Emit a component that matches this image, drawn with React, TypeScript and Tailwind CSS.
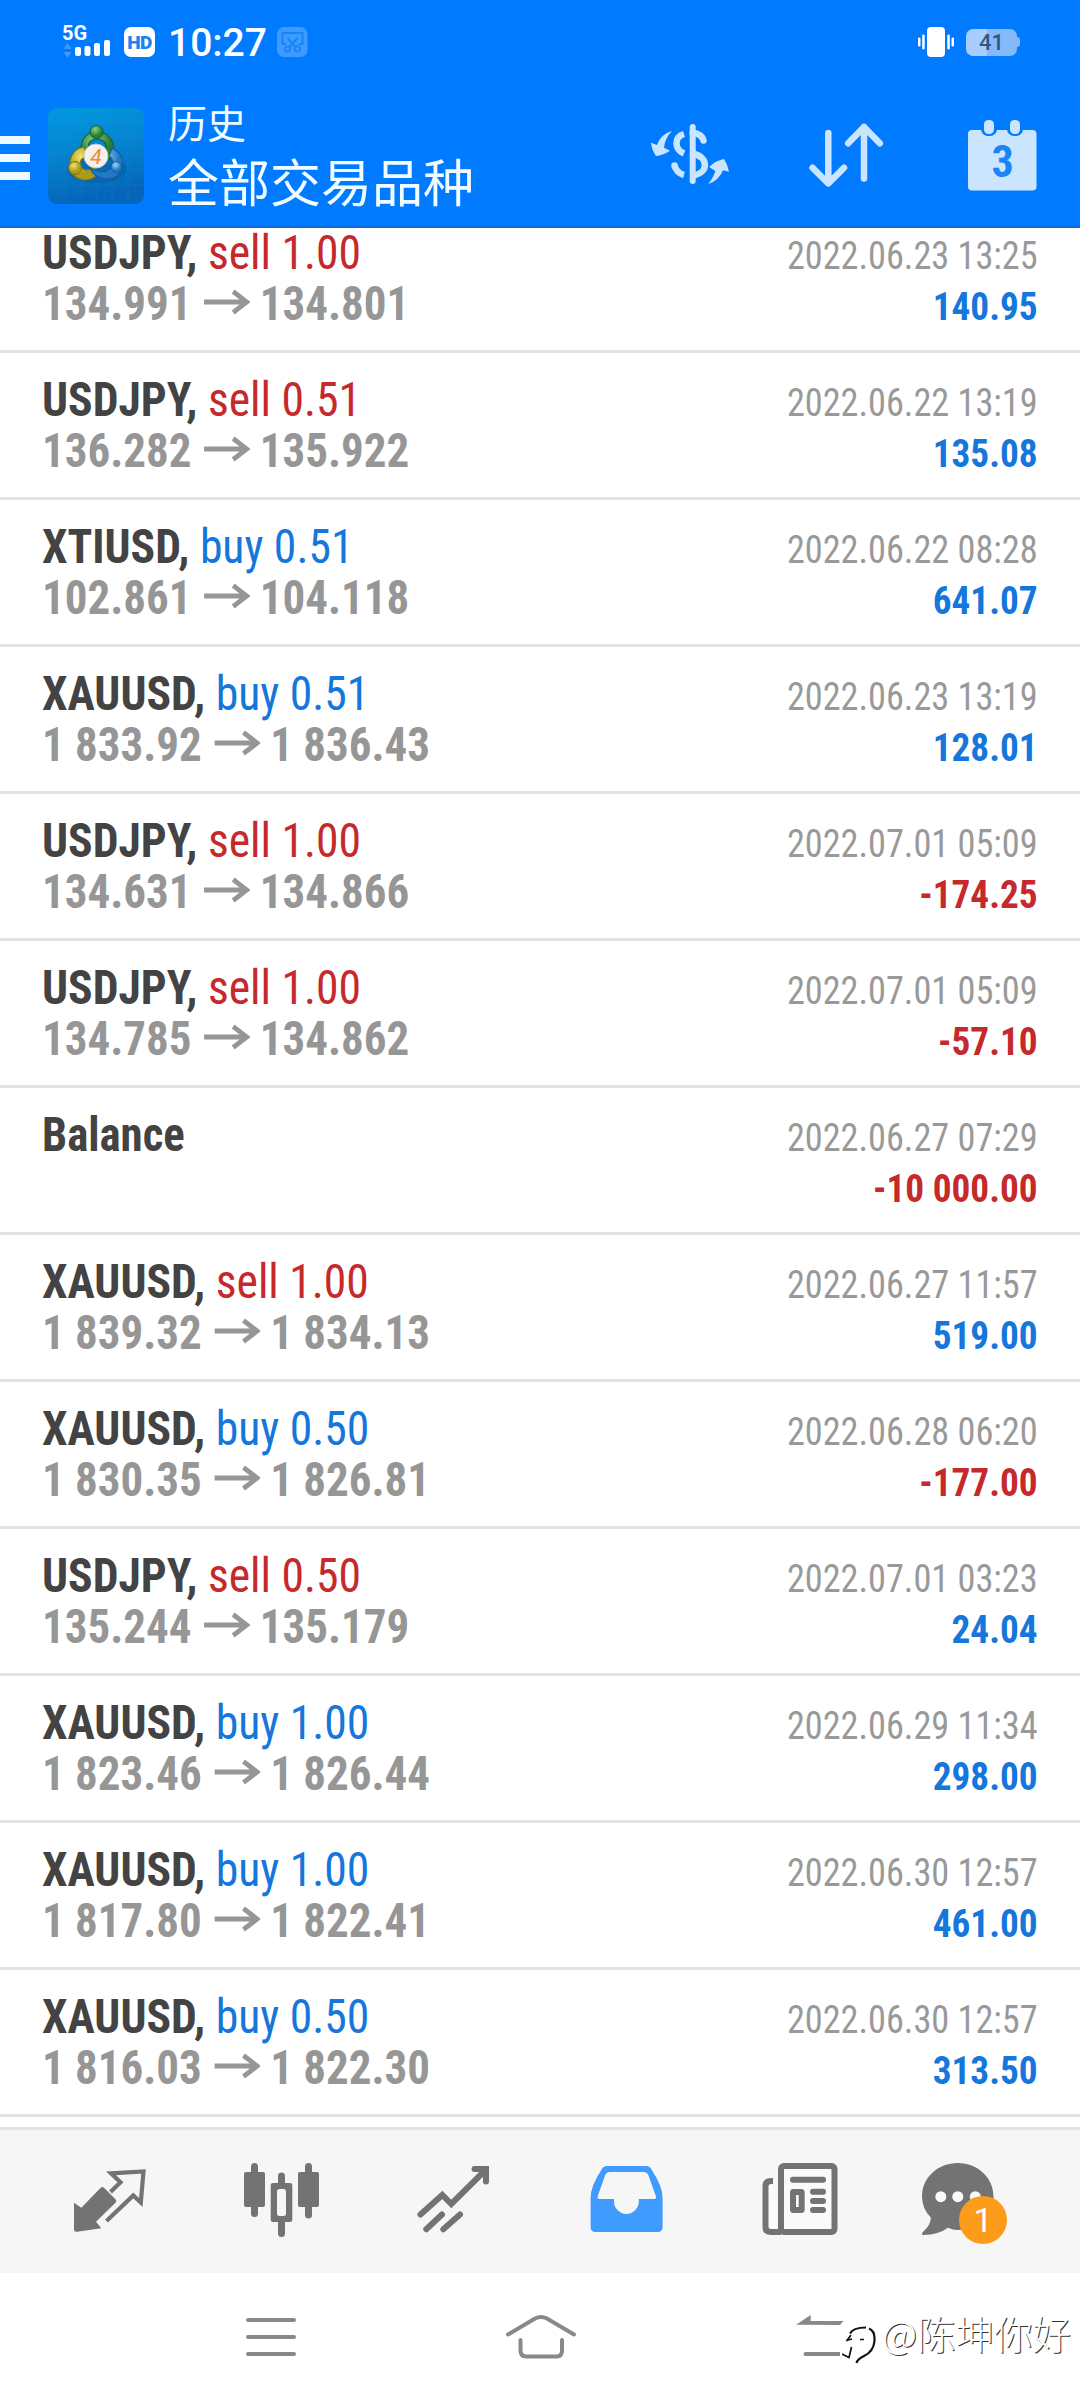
type Deal = {
  symbol: string;
  side?: "buy" | "sell";
  volume?: string;
  open?: string;
  close?: string;
  time: string;
  profit: string;
};

const deals: Deal[] = [
  { symbol: "USDJPY", side: "sell", volume: "1.00", open: "134.991", close: "134.801", time: "2022.06.23 13:25", profit: "140.95" },
  { symbol: "USDJPY", side: "sell", volume: "0.51", open: "136.282", close: "135.922", time: "2022.06.22 13:19", profit: "135.08" },
  { symbol: "XTIUSD", side: "buy", volume: "0.51", open: "102.861", close: "104.118", time: "2022.06.22 08:28", profit: "641.07" },
  { symbol: "XAUUSD", side: "buy", volume: "0.51", open: "1 833.92", close: "1 836.43", time: "2022.06.23 13:19", profit: "128.01" },
  { symbol: "USDJPY", side: "sell", volume: "1.00", open: "134.631", close: "134.866", time: "2022.07.01 05:09", profit: "-174.25" },
  { symbol: "USDJPY", side: "sell", volume: "1.00", open: "134.785", close: "134.862", time: "2022.07.01 05:09", profit: "-57.10" },
  { symbol: "Balance", time: "2022.06.27 07:29", profit: "-10 000.00" },
  { symbol: "XAUUSD", side: "sell", volume: "1.00", open: "1 839.32", close: "1 834.13", time: "2022.06.27 11:57", profit: "519.00" },
  { symbol: "XAUUSD", side: "buy", volume: "0.50", open: "1 830.35", close: "1 826.81", time: "2022.06.28 06:20", profit: "-177.00" },
  { symbol: "USDJPY", side: "sell", volume: "0.50", open: "135.244", close: "135.179", time: "2022.07.01 03:23", profit: "24.04" },
  { symbol: "XAUUSD", side: "buy", volume: "1.00", open: "1 823.46", close: "1 826.44", time: "2022.06.29 11:34", profit: "298.00" },
  { symbol: "XAUUSD", side: "buy", volume: "1.00", open: "1 817.80", close: "1 822.41", time: "2022.06.30 12:57", profit: "461.00" },
  { symbol: "XAUUSD", side: "buy", volume: "0.50", open: "1 816.03", close: "1 822.30", time: "2022.06.30 12:57", profit: "313.50" },
];

const StatusBar = () => (
  <div className="flex h-[84px] shrink-0 items-center pr-[60px] pl-[62px] font-['Roboto',sans-serif]">
    <svg width="48" height="34" viewBox="0 0 48 34" fill="#fff">
      <text x="0" y="15" fontSize="20" fontWeight="700" fontFamily="Roboto">5G</text>
      <path d="M5.500 18l4 6h-8zM5.500 33l4-6h-8z" fill="#3d9bff" />
      <rect x="13" y="22" width="6" height="9" rx="2" />
      <rect x="22.500" y="21" width="6" height="10" rx="2" />
      <rect x="32" y="18" width="6" height="13" rx="2" />
      <rect x="42" y="15" width="6" height="16" rx="2" />
    </svg>
    <div className="ml-[14px] flex h-[30px] w-[31px] items-center justify-center rounded-[7px] bg-white text-[19px] leading-none font-black tracking-[-0.5px] text-[#1a83f0]">
      HD
    </div>
    <div className="mt-0.5 ml-[13px] text-[39px] leading-none font-medium text-white">10:27</div>
    <svg className="ml-[10px]" width="31" height="30" viewBox="0 0 31 30" fill="none">
      <rect width="30.500" height="30" rx="7" fill="#3d9bff" />
      <path d="M9 17H5.500V6h20v11H22" stroke="#1683f7" strokeWidth="2" />
      <path d="M10.500 11l8 9M20.500 11l-8 9" stroke="#1683f7" strokeWidth="2" />
      <circle cx="10.500" cy="22" r="2.600" stroke="#1683f7" strokeWidth="1.800" />
      <circle cx="20.500" cy="22" r="2.600" stroke="#1683f7" strokeWidth="1.800" />
    </svg>
    <svg className="ml-auto" width="36" height="30" viewBox="0 0 36 30" fill="#fff">
      <rect x="9" width="18" height="30" rx="4" />
      <rect x="0" y="10.500" width="2.500" height="9" rx="1.200" />
      <rect x="4.200" y="7.500" width="2.500" height="15" rx="1.200" />
      <rect x="29.300" y="7.500" width="2.500" height="15" rx="1.200" />
      <rect x="33.500" y="10.500" width="2.500" height="9" rx="1.200" />
    </svg>
    <div className="ml-3 flex items-center">
      <div className="flex h-[27px] w-[51px] items-center justify-center rounded-[7px] bg-linear-to-r from-[#a9cdff] from-41% to-[#85b9fb] to-41% pt-0.5 text-[22px] leading-none font-medium text-[#33557f]">
        41
      </div>
      <div className="h-[10px] w-[3px] rounded-r bg-[#85b9fb]" />
    </div>
  </div>
);

const AppLogo = () => (
  <svg className="ml-[18px]" width="96" height="96" viewBox="0 0 96 96">
    <defs>
      <linearGradient id="logoBg" x1="0" y1="0" x2="0.200" y2="1">
        <stop offset="0" stopColor="#0398e2" />
        <stop offset="0.500" stopColor="#0583cf" />
        <stop offset="1" stopColor="#0565b8" />
      </linearGradient>
      <radialGradient id="green" cx="0.400" cy="0.300">
        <stop offset="0" stopColor="#8fd080" />
        <stop offset="1" stopColor="#27803a" />
      </radialGradient>
      <radialGradient id="yellow" cx="0.400" cy="0.300">
        <stop offset="0" stopColor="#f0e468" />
        <stop offset="1" stopColor="#a99a1c" />
      </radialGradient>
      <radialGradient id="blue" cx="0.400" cy="0.300">
        <stop offset="0" stopColor="#9ad6fb" />
        <stop offset="1" stopColor="#2178c2" />
      </radialGradient>
    </defs>
    <rect width="96" height="96" rx="9" fill="url(#logoBg)" />
    <path d="M0 13h96M0 29h96M0 45h96M0 61h96M0 77h96M16 0v96M32 0v96M48 0v96M64 0v96M80 0v96" stroke="#35b2ee" strokeOpacity="0.120" />
    <ellipse cx="49" cy="61" rx="30" ry="14" fill="#044f8e" opacity="0.300" />
    <path d="M35 46c-5-12 2-22 14-22s20 10 15 24c-3 6-8 5-10 1l4-8c1-6-3-10-9-10s-10 4-8 10l3 6c-2 3-7 3-9-1z" fill="url(#green)" stroke="#17602f" strokeWidth="1.200" />
    <path d="M36 39c-9 1-15 9-14 19 1 9 7 14 15 14 6 0 10-2 12-6l-3-7c-5 4-11 4-13-1-2-6 2-9 7-9z" fill="url(#yellow)" stroke="#7c7016" strokeWidth="1.200" />
    <path d="M64 40c8 3 12 11 10 20-2 8-9 12-17 11-7-1-12-4-15-11 7 4 15 5 20 1 4-4 4-9-1-13z" fill="url(#blue)" stroke="#155c9c" strokeWidth="1.200" />
    <circle cx="48.500" cy="24" r="6.500" fill="url(#green)" stroke="#17602f" strokeWidth="1" />
    <circle cx="27" cy="60" r="6.500" fill="url(#yellow)" stroke="#7c7016" strokeWidth="1" />
    <circle cx="68.500" cy="59" r="5.500" fill="url(#blue)" stroke="#155c9c" strokeWidth="1" />
    <circle cx="48" cy="48" r="12" fill="#f4f0ee" stroke="#c9c4bd" strokeWidth="1" />
    <text x="48" y="55.500" fontSize="21" textAnchor="middle" fontFamily="Roboto" fontStyle="italic" fill="#ef8a2c">4</text>
  </svg>
);

const Header = () => (
  <header className="flex h-[228px] shrink-0 flex-col border-b-2 border-[#0b6ddb] bg-[#007bff]">
    <StatusBar />
    <div className="flex h-36 shrink-0 items-center">
      <div className="mt-1 flex w-[30px] flex-col gap-[10px]">
        <div className="h-2 bg-[#eefaff]" />
        <div className="h-2 bg-[#eefaff]" />
        <div className="h-2 bg-[#eefaff]" />
      </div>
      <AppLogo />
      <div className="mb-[11px] ml-6 font-['Noto_Sans_CJK_SC',sans-serif] text-[#f0fcff]">
        <div className="text-[39px] leading-[58px]">历史</div>
        <div className="text-[51px] leading-[60px]">全部交易品种</div>
      </div>
      <div className="ml-auto flex">
        <div className="flex w-[156px] justify-center">
          <svg width="96" height="96" viewBox="0 0 96 96" fill="none" stroke="#cce5ff" strokeWidth="6.500">
            <path d="M50.700 19v54" strokeWidth="6" strokeLinecap="round" />
            <path d="M42 26C32 29 32 41 42 45.500" />
            <path d="M32.500 57.500Q34.500 65 42 67" />
            <path d="M32.500 57.500h0" strokeLinecap="round" />
            <path d="M50.700 24.700Q60 26 61.500 32.500" strokeLinecap="round" />
            <path d="M50.700 45.500C67 49 67 65 50.700 67.500" />
            <path d="M30 23Q18.700 26 15 37L9 34.700Q10 42.700 14 48 21.300 47.300 28 42.700L22 39.700Q23 30 30 23z" fill="#cce5ff" stroke="none" />
            <path d="M66.300 76Q72 68.700 73.300 63L67.300 59Q73 52.700 82 51 85.300 56 87 63.700L81 62.300Q76.700 72.700 66.300 76z" fill="#cce5ff" stroke="none" />
          </svg>
        </div>
        <div className="flex w-[156px] justify-center">
          <svg width="96" height="96" viewBox="0 0 96 96" fill="none" stroke="#cce5ff" strokeWidth="6.500" strokeLinecap="round" strokeLinejoin="round">
            <path d="M30.300 25v50M14.500 59.700L30.300 75.500 46 59.700" />
            <path d="M66 70.500V19M50.200 35.300L66 19l15.800 16.300" />
          </svg>
        </div>
        <div className="flex w-[156px] justify-center">
          <svg width="96" height="96" viewBox="0 0 96 96">
            <rect x="14" y="22" width="68.500" height="60.500" rx="4" fill="#cce5ff" />
            <rect x="27" y="4" width="16" height="24" rx="7" fill="#007bff" />
            <rect x="53" y="4" width="16" height="24" rx="7" fill="#007bff" />
            <rect x="30" y="12" width="10" height="14" rx="4.500" fill="#cce5ff" />
            <rect x="56" y="12" width="10" height="14" rx="4.500" fill="#cce5ff" />
            <text x="48.500" y="69" fontSize="44" fontWeight="700" textAnchor="middle" fontFamily="Roboto Condensed" fill="#1a86f5">3</text>
          </svg>
        </div>
      </div>
    </div>
  </header>
);

const DealRow = ({ deal }: { deal: Deal }) => (
  <div className="flex h-[147px] shrink-0 justify-between border-b-[3px] border-[#e3e3e3] px-[42px] font-['Roboto_Condensed',sans-serif] whitespace-nowrap">
    <div className="pt-[21px] text-[48px] leading-[51px]">
      <div className={deal.side ? "origin-left scale-x-[0.95]" : "origin-left scale-x-[0.933]"}>
        <span className="font-bold text-[#434343]">{deal.side ? deal.symbol + "," : deal.symbol}</span>
        {deal.side && (
          <span className={deal.side === "buy" ? "font-[440] text-[#1576dc]" : "font-[440] text-[#c5292b]"}>
            {" "}
            {deal.side} {deal.volume}
          </span>
        )}
      </div>
      {deal.open && (
        <div className="flex origin-left scale-x-[0.937] font-bold text-[#969696]">
          <span>{deal.open}</span>
          <svg className="mt-[9px] mr-[11px] ml-[13px]" width="49" height="30" viewBox="0 0 49 30" fill="none" stroke="#969696" strokeWidth="5">
            <path d="M0 15h46M31 4.500L45.500 15 31 25.500" />
          </svg>
          <span>{deal.close}</span>
        </div>
      )}
    </div>
    <div className="pt-[25px] text-right text-[39px] leading-[51px]">
      <div className="origin-right scale-x-[0.93] font-[430] text-[#999]">{deal.time}</div>
      <div className={"origin-right scale-x-[0.955] font-bold " + (deal.profit.startsWith("-") ? "text-[#c5292b]" : "text-[#1576dc]")}>
        {deal.profit}
      </div>
    </div>
  </div>
);

const TabBar = () => (
  <nav className="flex h-[146px] shrink-0 border-t-[3px] border-[#e3e3e3] bg-[#f6f6f6] px-6 pt-6">
    <div className="flex w-[172px] justify-center">
      <svg width="100" height="96" viewBox="0 0 100 96" fill="none">
        <path d="M14 48.700L21.300 53.700 40.500 34Q42.300 32 44 33.700L55.700 45.500Q57 47 55.700 48.500L36 67.700 41.300 74.300 17 77.700Q14 78 14 75.500z" fill="#737373" />
        <path d="M50.500 38L60.500 28.300 51 19.300 83.500 17.500 80.800 48.500 73.300 41.500 46.500 67" stroke="#737373" strokeWidth="4.200" />
      </svg>
    </div>
    <div className="flex w-[172px] justify-center">
      <svg width="100" height="96" viewBox="0 0 100 96" fill="#737373">
        <rect x="12" y="18" width="21" height="35" rx="2" />
        <rect x="19" y="9" width="7" height="54" rx="3.500" />
        <path fillRule="evenodd" d="M41 29h17a2.300 2.300 0 0 1 2.300 2.300v34.400A2.300 2.300 0 0 1 58 68H41a2.300 2.300 0 0 1-2.300-2.300V31.300A2.300 2.300 0 0 1 41 29zm6.500 6A2.500 2.500 0 0 0 45 37.500v22a2.500 2.500 0 0 0 2.500 2.500h4a2.500 2.500 0 0 0 2.500-2.500v-22a2.500 2.500 0 0 0-2.500-2.500z" />
        <path d="M46 29.500V22a3.500 3.500 0 0 1 7 0v7.500zM46 67.500v12a3.500 3.500 0 0 0 7 0v-12z" />
        <rect x="66" y="18" width="21" height="35" rx="2" />
        <rect x="73" y="9" width="7" height="55.500" rx="3.500" />
      </svg>
    </div>
    <div className="flex w-[172px] justify-center">
      <svg width="100" height="96" viewBox="0 0 100 96" fill="none" stroke="#737373" strokeWidth="6" strokeLinecap="round">
        <path d="M16.500 60.500L38.300 41l9 9L81 16.500M70.500 15H82v12.500" />
        <path d="M22.300 75.300L38 60.500M39.300 75.300L56 60.500" />
      </svg>
    </div>
    <div className="flex w-[172px] justify-center">
      <svg width="100" height="96" viewBox="0 0 100 96" fill="#409bff">
        <path
          fillRule="evenodd"
          d="M31 12h39q4 0 5.500 3.500Q86.600 32 86.600 44v29q0 5-5 5h-62q-5 0-5-5V44q0-12 11-28.500Q27 12 31 12zM34 18q-3.500 0-4.800 3L21.800 42q-.8 3 1.500 3H38v2.500a12.400 12.400 0 0 0 24.800 0V45h15.500q2.300 0 1.500-3L72.300 21Q71 18 67.500 18z"
        />
      </svg>
    </div>
    <div className="flex w-[172px] justify-center">
      <svg width="100" height="96" viewBox="0 0 100 96" fill="none" stroke="#737373" strokeWidth="6">
        <path d="M25 27h-2q-5.500 0-5.500 5v41q0 5 5.500 5H33" fill="#fafafa" />
        <rect x="33" y="12" width="53.500" height="66" rx="3" fill="#fafafa" />
        <path d="M45 25.700h30M65 37.700h10M65 47h10M65 56h10" strokeLinecap="round" />
        <rect x="45" y="38" width="8.700" height="18" rx="0.500" />
      </svg>
    </div>
    <div className="flex w-[172px] justify-center">
      <div className="relative h-24 w-[100px]">
        <svg width="100" height="96" viewBox="0 0 100 96" fill="#737373">
          <path d="M37.800 9C57.500 9 73.500 23.500 73.500 42.500S57.500 76 37.800 76q-5 0-9.800-2.300-9 6.800-24.500 7.300-3.500-.5 0-3.500 7.500-7 7.300-14Q2 54.500 2 42.500C2 23.500 18 9 37.800 9z" />
          <circle cx="20.800" cy="42.700" r="5.500" fill="#fafafa" />
          <circle cx="37.800" cy="42.700" r="5.500" fill="#fafafa" />
          <circle cx="55.300" cy="42.700" r="5.500" fill="#fafafa" />
        </svg>
        <span className="absolute top-[42px] left-[39px] flex h-12 w-12 items-center justify-center rounded-full bg-[#fd9b1a] font-['Roboto',sans-serif] text-[34px] leading-none text-white">
          1
        </span>
      </div>
    </div>
  </nav>
);

const SystemNav = () => (
  <div className="relative flex h-[127px] shrink-0 justify-center bg-white pt-9 pl-0.5">
    <div className="flex w-[270px] justify-center">
      <svg width="80" height="56" viewBox="0 0 80 56" stroke="#898989" strokeWidth="4" strokeLinecap="round">
        <path d="M17 11h46M17 28h46M17 45h46" />
      </svg>
    </div>
    <div className="flex w-[270px] justify-center">
      <svg width="80" height="56" viewBox="0 0 80 56" fill="none" stroke="#898989" strokeWidth="4" strokeLinecap="round">
        <path d="M7 25.500L34 9.500Q40 6.500 46 9.500L73 25.500" />
        <path d="M19.500 31v10.500q0 6 6 6h30q5.500 0 5.500-6V31" />
      </svg>
    </div>
    <div className="flex w-[270px] justify-center">
      <svg width="80" height="56" viewBox="0 0 80 56" fill="#898989">
        <path d="M25 15.800L39.700 6v6H72.500l-3.500 4z" />
        <path d="M34.500 43H69v4H34.500a2 2 0 0 1 0-4z" />
      </svg>
    </div>
    {/* author watermark */}
    <div className="absolute top-[35px] right-[9px] flex items-start">
      <svg className="mt-3" width="40" height="48" viewBox="0 0 40 48" fill="none">
        <path d="M6 15L16 7h12l5 14-2 12-14 8L1 36z" fill="#fff" />
        <path d="M8 13.500Q11 7.500 24 7.500M27 8.500Q32.500 11 32.500 18v3Q31.500 31.500 22 36q-6.500 3-7.500 7" stroke="#111" strokeWidth="2.200" />
        <path d="M4.500 21L9 15M4 20.500l6-1.500M18 19.500h4M9.500 27L7 37.500l-7-3.500" stroke="#111" strokeWidth="1.700" />
      </svg>
      <span className="font-['Noto_Sans_CJK_SC',sans-serif] text-[38.5px] leading-[48px] font-light text-white [text-shadow:1px_1px_0_#333]">
        @陈坤你好
      </span>
    </div>
  </div>
);

export default function App() {
  return (
    <div className="flex h-[2400px] w-[1080px] flex-col overflow-hidden bg-white">
      <Header />
      <main className="flex min-h-0 flex-1 flex-col overflow-hidden">
        <div className="-mt-[22px] flex flex-col">
          {deals.map((deal, i) => (
            <DealRow key={i} deal={deal} />
          ))}
        </div>
      </main>
      <TabBar />
      <SystemNav />
    </div>
  );
}
